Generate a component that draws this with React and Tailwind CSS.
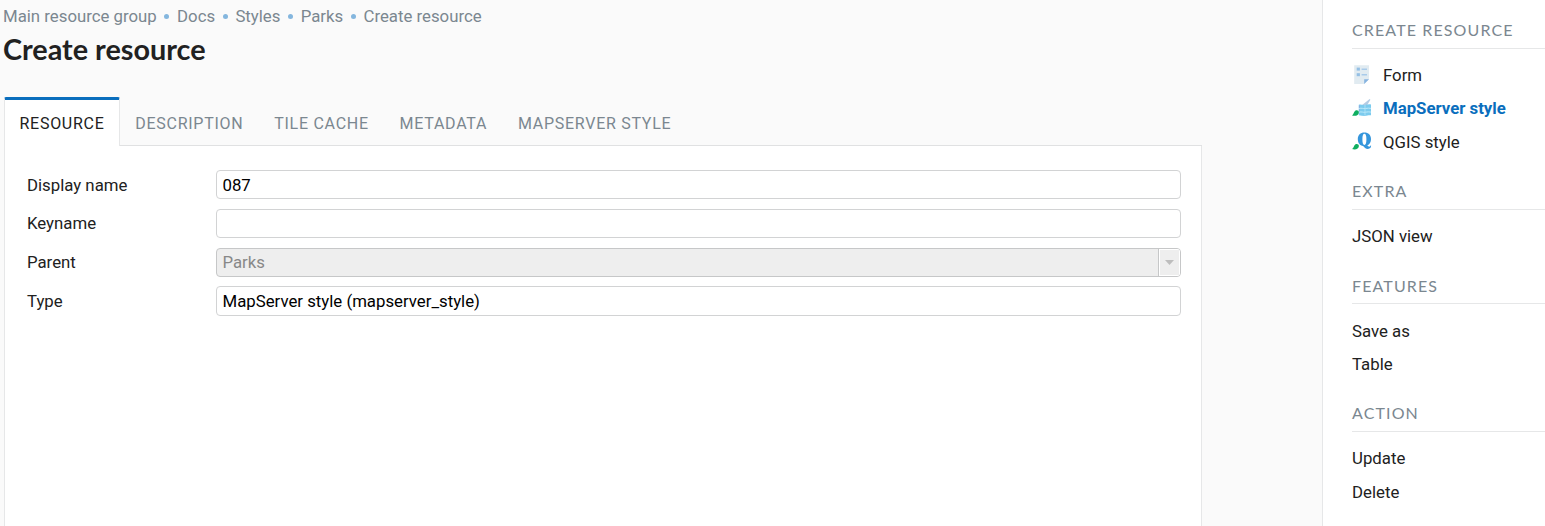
import React from "react";

const crumbs = ["Main resource group", "Docs", "Styles", "Parks", "Create resource"];
const tabs = ["Description", "Tile cache", "Metadata", "MapServer style"];

function FormIcon() {
  return (
    <svg className="block h-5 w-5" viewBox="0 0 20 20">
      <path d="M2.200 0.200h14.800v14l-4.800 4.800H2.200z" fill="#e1ebf1" />
      <path d="M12.200 14.200H17l-4.800 4.800z" fill="#86b3e0" />
      <rect x="4.700" y="2.600" width="3.200" height="3" fill="#94bfe4" />
      <rect x="4.700" y="8.200" width="3.200" height="3" fill="#94bfe4" />
      <path d="M9.600 4.200H15M9.600 9.800H15" stroke="#a9cbea" strokeWidth="1.400" />
    </svg>
  );
}

function Leaf() {
  return (
    <path
      d="M0 5.400C1.700 4.900 1.500 2.200 3.500.6 5-.4 7 .6 6.900 2.400 6.800 5.500 3.200 6.500 0 5.400z"
      fill="#0fae60"
    />
  );
}

function MapServerIcon() {
  return (
    <svg className="block h-5 w-5" viewBox="0 0 20 20">
      <path d="M9.500 7.500 17.600.9l.8.900-3.600 6z" fill="#b4cce4" />
      <path d="M6.800 6.800c2-.8 4 .6 6.100.1s4.100-1.100 6.100-.5v10.900c-2-.5-4 .6-6.100.6s-4.100-.3-6.100-.6z" fill="#7ccbee" />
      <path d="M7 10.400c3-.6 4 .5 6.300.1s4-.5 5.700-.1M7 14.100c3-.6 4 .5 6.300.1s4-.5 5.700-.1" fill="none" stroke="#c4ecf9" strokeWidth=".9" />
      <path d="M13 7v10.500" stroke="#b5e5f7" strokeWidth=".8" />
      <path d="M7.400 7.500v2.300M7.400 11.300v2" stroke="#8baee0" strokeWidth="1" />
      <g transform="translate(0 12)"><Leaf /></g>
    </svg>
  );
}

function QgisIcon() {
  return (
    <svg className="block h-5 w-5" viewBox="0 0 20 20">
      <g transform="translate(0 .5)">
        <path
          fillRule="evenodd"
          d="M12.400 0c4 0 6.600 2.700 6.600 6.700 0 2.900-1.400 5.100-3.700 6.100.7 1 1.500 1.500 2.300 1.300.5-.1.800-.5.900-1h.600c.1 2.200-1.200 3.300-3.200 3.300-2.400 0-3.500-1.500-4.800-2.900-3.200-.5-5.300-3.100-5.300-6.800C5.800 2.700 8.400 0 12.400 0zM12.400 1.200c-1.400 0-2 1.900-2 5.500s.6 5.700 2 5.700 2-2.100 2-5.700-.6-5.500-2-5.500z"
          fill="#3596dc"
        />
      </g>
      <g transform="translate(0 11.700)"><Leaf /></g>
    </svg>
  );
}

function Heading({ low, children }) {
  return (
    <h2
      className={
        low
          ? "flex h-9 items-center border-b border-[#e6e7e8] font-['Lato',sans-serif] text-[16px] tracking-[1.120px] text-[#7b8790] uppercase"
          : "flex h-9 items-center border-b border-[#e6e7e8] pb-[2px] font-['Lato',sans-serif] text-[16px] tracking-[1.120px] text-[#7b8790] uppercase"
      }
    >
      {children}
    </h2>
  );
}

function Item({ icon, active, children }) {
  return (
    <li className={active ? "flex h-[33.500px] items-center gap-[11px] font-bold text-[#0a6ebd]" : "flex h-[33.500px] items-center gap-[11px]"}>
      {icon}
      <span>{children}</span>
    </li>
  );
}

function Row({ label, className, children }) {
  return (
    <div className={`flex items-start ${className}`}>
      <label className="w-[189px] shrink-0">{label}</label>
      {children}
    </div>
  );
}

function Field({ value, className }) {
  return (
    <input
      readOnly
      defaultValue={value}
      className={`min-w-0 flex-1 rounded-[4px] border border-[#d2d3d4] bg-white px-[5.500px] text-black outline-none ${className}`}
    />
  );
}

export default function App() {
  return (
    <div className="flex h-[526px] w-[1545px] overflow-hidden bg-[#fafafa] font-['Roboto',sans-serif] text-[16.800px] leading-6 text-[#212121]">
      <main className="flex w-[1322px] shrink-0 flex-col">
        <nav className="flex h-[32px] items-center pl-[3px] text-[#7b8790]">
          {crumbs.map((crumb, i) => (
            <React.Fragment key={crumb}>
              {i > 0 && <span className="mx-[7.650px] h-[5px] w-[5px] rounded-full bg-[#84b6de]" />}
              <span>{crumb}</span>
            </React.Fragment>
          ))}
        </nav>
        <h1 className="h-[65px] pl-[3px] font-['Lato',sans-serif] text-[28.800px] leading-[34px] font-bold">Create resource</h1>

        <div className="ml-[4px] flex w-[1198px] flex-1 flex-col">
          <div className="flex h-[49px] text-[16px] tracking-[0.720px] text-[#7b8790] uppercase">
            <div className="flex w-[116px] items-center justify-center rounded-t-[2px] border-x border-t-[3px] border-x-[#e6e7e8] border-t-[#0a6ebd] bg-white pt-[2px] text-[#212121]">
              Resource
            </div>
            <div className="flex flex-1 items-center gap-[30.900px] border-b border-[#e0e1e2] pt-[6px] pl-[15.300px]">
              {tabs.map((tab) => (
                <span key={tab}>{tab}</span>
              ))}
            </div>
          </div>
          <div className="flex-1 border-x border-[#e6e7e8] bg-white pt-[24px] pr-[20px] pl-[22px]">
            <Row label="Display name" className="h-[39px] leading-[30px]"><Field value="087" className="h-[29px] pt-[1px]" /></Row>
            <Row label="Keyname" className="h-[39px] leading-[28px]"><Field value="" className="h-[29px]" /></Row>
            <Row label="Parent" className="h-[38px] leading-[28px]">
              <div className="flex h-[29px] flex-1 overflow-hidden rounded-[4px] border border-[#c6c7c8] bg-[#eeeeee] text-[#888888]">
                <span className="flex-1 pl-[5.500px] leading-[26px]">Parks</span>
                <span className="flex w-[22px] items-center justify-center border-l border-[#c6c7c8] shadow-[inset_0_0_0_1px_#fff]">
                  <svg className="block h-[5px] w-[9px]" viewBox="0 0 9 5">
                    <path d="M0 0h9L4.500 5z" fill="#bdbdbd" />
                  </svg>
                </span>
              </div>
            </Row>
            <Row label="Type" className="h-[38px] leading-[30px]">
              <Field value="MapServer style (mapserver_style)" className="h-[30px]" />
            </Row>
          </div>
        </div>
      </main>

      <aside className="flex flex-1 flex-col border-l border-[#e6e7e8] bg-white pt-[13px] pl-[29px]">
        <Heading>Create resource</Heading>
        <ul className="mt-[9px] mb-[15px]">
          <Item icon={<FormIcon />}>Form</Item>
          <Item icon={<MapServerIcon />} active>MapServer style</Item>
          <Item icon={<QgisIcon />}>QGIS style</Item>
        </ul>
        <Heading low>Extra</Heading>
        <ul className="mt-[10px] mb-[15px]">
          <Item>JSON view</Item>
        </ul>
        <Heading low>Features</Heading>
        <ul className="mt-[10px] mb-[15px]">
          <Item>Save as</Item>
          <Item>Table</Item>
        </ul>
        <Heading>Action</Heading>
        <ul className="mt-[9.400px]">
          <Item>Update</Item>
          <Item>Delete</Item>
        </ul>
      </aside>
    </div>
  );
}
